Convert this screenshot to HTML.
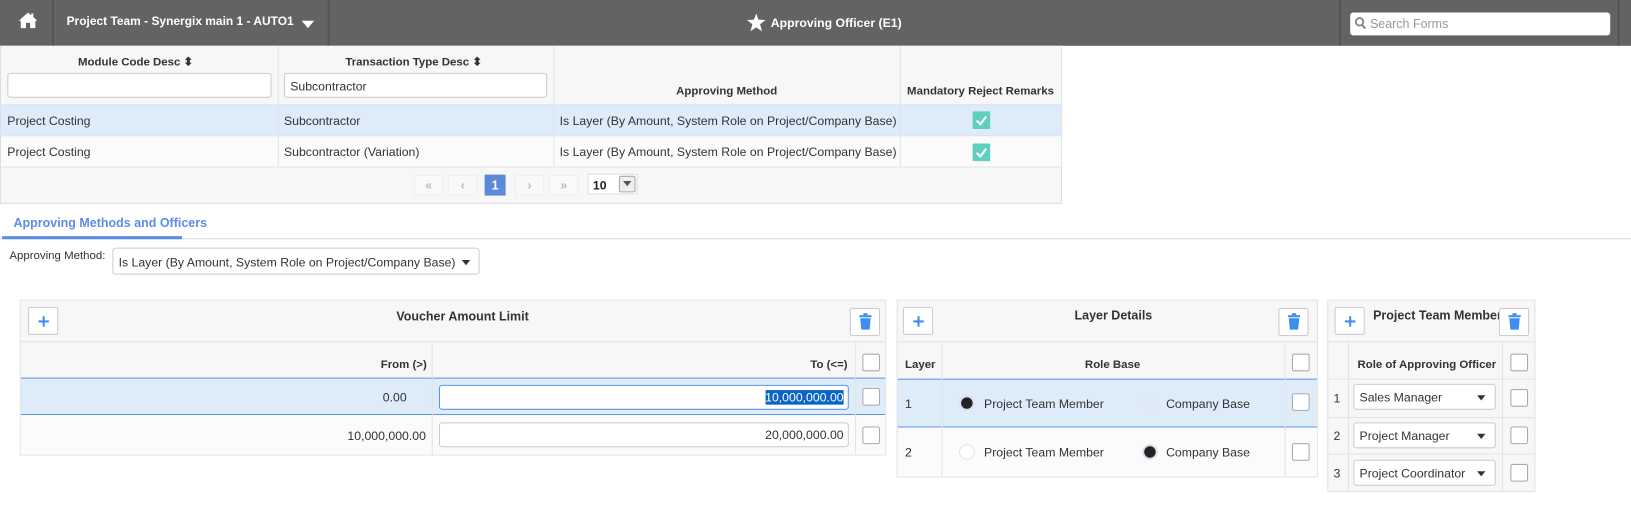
<!DOCTYPE html>
<html><head><meta charset="utf-8"><style>
*{box-sizing:border-box;margin:0;padding:0}
html,body{width:1631px;height:528px;overflow:hidden;background:#fff}
#wrap{position:absolute;left:0;top:0;width:1568px;height:508px;transform:scale(1.0402);transform-origin:0 0;font-family:"Liberation Sans",Arial,sans-serif;font-size:11.8px;color:#333;white-space:nowrap}
.a{position:absolute}
.top{left:0;top:0;width:1568px;height:44px;background:#636363}
.sep{top:0;width:2px;height:44px;background:#555}
.w{color:#fff;font-weight:bold}
.b{font-weight:bold;font-size:11px;color:#333}
.cell{position:absolute;border-right:1px solid #e3e3e3;border-bottom:1px solid #e3e3e3}
.inp{position:absolute;background:#fff;border:1px solid #ccc;border-radius:3px}
.cb{position:absolute;width:17px;height:17px;background:#fff;border:1px solid #aaa;border-radius:2px}
.btn{position:absolute;width:29px;height:27px;background:#fff;border:1px solid #ccc;border-radius:2px}
.plus:before{content:"";position:absolute;left:9px;top:12px;width:10px;height:2px;background:#3d8ef0}
.plus:after{content:"";position:absolute;left:13px;top:8px;width:2px;height:10px;background:#3d8ef0}
.rad{position:absolute;width:15px;height:15px;border-radius:50%;border:1px solid #e6e6e6;background:#fff}
.rad.on{background:#222;border:2px solid #dde;}
.pg{position:absolute;top:168px;width:28px;height:20px;border:1px solid #eee;background:#f9f9f9;color:#bbb;text-align:center;line-height:18px;font-size:12px;font-weight:bold}
.tri{display:inline-block;width:0;height:0;border-left:4px solid transparent;border-right:4px solid transparent;border-top:5px solid #333;vertical-align:middle}
</style></head><body><div id="wrap">
<div class="a top"></div>
<div class="a sep" style="left:50px"></div>
<div class="a sep" style="left:315px"></div>
<div class="a sep" style="left:1287px"></div>
<div class="a sep" style="left:1555px"></div>
<svg class="a" style="left:17px;top:11px" width="20" height="17" viewBox="0 0 20 17"><path d="M10 1 L1 9 L3 9 L3 16 L8 16 L8 11 L12 11 L12 16 L17 16 L17 9 L19 9 L15 5.5 L15 2 L13 2 L13 3.8 Z" fill="#fff"/></svg>
<div class="a w" style="left:64px;top:15px;font-size:11.5px">Project Team - Synergix main 1 - AUTO1</div>
<div class="a" style="left:290px;top:20px;width:0;height:0;border-left:6px solid transparent;border-right:6px solid transparent;border-top:7px solid #fff"></div>
<svg class="a" style="left:718px;top:13px" width="18" height="17" viewBox="0 0 24 23"><path d="M12 0 L15 8 L24 8.5 L17 14 L19.5 23 L12 18 L4.5 23 L7 14 L0 8.5 L9 8 Z" fill="#fff"/></svg>
<div class="a w" style="left:741px;top:15px;font-size:11.8px">Approving Officer (E1)</div>
<div class="a" style="left:1298px;top:12px;width:250px;height:22px;background:#fff;border-radius:3px"></div>
<svg class="a" style="left:1302px;top:16px" width="12" height="13" viewBox="0 0 12 13"><circle cx="5" cy="5" r="3.6" stroke="#888" stroke-width="1.8" fill="none"/><path d="M7.5 8 L10.5 11.5" stroke="#888" stroke-width="2"/></svg>
<div class="a" style="left:1317px;top:16px;color:#999;font-size:12px">Search Forms</div>

<div class="a" style="left:0;top:44px;width:1021px;height:152px;background:#f7f7f7;border:1px solid #ddd;border-top:none"></div>
<div class="cell" style="left:0;top:44px;width:268px;height:57px"></div>
<div class="cell" style="left:268px;top:44px;width:265px;height:57px"></div>
<div class="cell" style="left:533px;top:44px;width:333px;height:57px"></div>
<div class="cell" style="left:866px;top:44px;width:155px;height:57px"></div>
<div class="a b" style="left:75px;top:53px">Module Code Desc &#x2B0D;</div>
<div class="a b" style="left:332px;top:53px">Transaction Type Desc &#x2B0D;</div>
<div class="inp" style="left:7px;top:70px;width:254px;height:24px"></div>
<div class="inp" style="left:273px;top:70px;width:253px;height:24px;padding:5px 5px">Subcontractor</div>
<div class="a b" style="left:650px;top:82px">Approving Method</div>
<div class="a b" style="left:872px;top:82px">Mandatory Reject Remarks</div>
<div class="a" style="left:1px;top:101px;width:1019px;height:30px;background:#deebf8"></div>
<div class="a" style="left:1px;top:131px;width:1019px;height:30px;background:#fbfbfb"></div>
<div class="cell" style="left:0;top:101px;width:268px;height:30px"></div>
<div class="cell" style="left:268px;top:101px;width:265px;height:30px"></div>
<div class="cell" style="left:533px;top:101px;width:333px;height:30px"></div>
<div class="cell" style="left:866px;top:101px;width:155px;height:30px"></div>
<div class="cell" style="left:0;top:131px;width:268px;height:30px"></div>
<div class="cell" style="left:268px;top:131px;width:265px;height:30px"></div>
<div class="cell" style="left:533px;top:131px;width:333px;height:30px"></div>
<div class="cell" style="left:866px;top:131px;width:155px;height:30px"></div>
<div class="a" style="left:7px;top:109px">Project Costing</div>
<div class="a" style="left:273px;top:109px">Subcontractor</div>
<div class="a" style="left:538px;top:109px">Is Layer (By Amount, System Role on Project/Company Base)</div>
<div class="a" style="left:7px;top:139px">Project Costing</div>
<div class="a" style="left:273px;top:139px">Subcontractor (Variation)</div>
<div class="a" style="left:538px;top:139px">Is Layer (By Amount, System Role on Project/Company Base)</div>
<svg class="a" style="left:935px;top:107px" width="17" height="17"><rect width="17" height="17" rx="1" fill="#5fcfbf"/><path d="M4 9 L7.5 12.5 L13 5" stroke="#fff" stroke-width="2" fill="none"/></svg>
<svg class="a" style="left:935px;top:138px" width="17" height="17"><rect width="17" height="17" rx="1" fill="#5fcfbf"/><path d="M4 9 L7.5 12.5 L13 5" stroke="#fff" stroke-width="2" fill="none"/></svg>
<div class="pg" style="left:398px">«</div>
<div class="pg" style="left:431px">‹</div>
<div class="pg" style="left:466px;width:20px;background:#5b8ad6;border-color:#5b8ad6;color:#fff">1</div>
<div class="pg" style="left:495px">›</div>
<div class="pg" style="left:528px">»</div>
<div class="a" style="left:565px;top:167px;width:48px;height:20px;background:#fff;border:1px solid #ddd;padding:3px 4px;font-weight:bold;color:#222">10</div>
<div class="a" style="left:595px;top:169px;width:16px;height:16px;background:#eee;border:1px solid #aaa;border-radius:2px;text-align:center;line-height:12px"><span class="tri" style="border-top-color:#555"></span></div>

<div class="a" style="left:13px;top:207px;color:#5b8de8;font-weight:bold;font-size:12px">Approving Methods and Officers</div>
<div class="a" style="left:0;top:229px;width:1568px;height:1px;background:#ddd"></div>
<div class="a" style="left:2px;top:227px;width:173px;height:3px;background:#5b8de8"></div>
<div class="a" style="left:9px;top:240px;font-size:11px">Approving Method:</div>
<div class="inp" style="left:108px;top:238px;width:353px;height:26px;padding:6px 5px">Is Layer (By Amount, System Role on Project/Company Base) &nbsp;<span class="tri"></span></div>

<div class="a" style="left:19px;top:288px;width:833px;height:150px;background:#f7f7f7;border:1px solid #e3e3e3"></div>
<div class="a" style="left:20px;top:328px;width:831px;height:1px;background:#e3e3e3"></div>
<div class="btn plus" style="left:27px;top:295px"></div>
<div class="a b" style="left:381px;top:297px;font-size:12px">Voucher Amount Limit</div>
<div class="btn" style="left:817px;top:296px"></div>
<div class="a" style="left:415px;top:329px;width:1px;height:108px;background:#e3e3e3"></div>
<div class="a" style="left:822px;top:329px;width:1px;height:108px;background:#e3e3e3"></div>
<div class="a b" style="left:366px;top:345px">From (&gt;)</div>
<div class="a b" style="left:779px;top:345px">To (&lt;=)</div>
<div class="cb" style="left:829px;top:340px"></div>
<div class="a" style="left:20px;top:363px;width:831px;height:36px;background:#deebf8;border-top:1px solid #5b97e8;border-bottom:1px solid #5b97e8"></div>
<div class="a" style="left:415px;top:363px;width:1px;height:36px;background:#e3e3e3"></div>
<div class="a" style="left:822px;top:363px;width:1px;height:36px;background:#e3e3e3"></div>
<div class="a" style="left:20px;top:399px;width:831px;height:38px;background:#fbfbfb"></div>
<div class="a" style="left:415px;top:399px;width:1px;height:38px;background:#e3e3e3"></div>
<div class="a" style="left:822px;top:399px;width:1px;height:38px;background:#e3e3e3"></div>
<div class="a" style="left:368px;top:375px">0.00</div>
<div class="a" style="left:334px;top:412px">10,000,000.00</div>
<div class="inp" style="left:422px;top:370px;width:394px;height:24px;border-color:#5b97e8;text-align:right;padding:4px 4px"><span style="background:#0a64c8;color:#fff">10,000,000.00</span></div>
<div class="inp" style="left:422px;top:406px;width:394px;height:24px;text-align:right;padding:4px 4px">20,000,000.00</div>
<div class="cb" style="left:829px;top:373px"></div>
<div class="cb" style="left:829px;top:410px"></div>

<div class="a" style="left:862px;top:288px;width:405px;height:171px;background:#f7f7f7;border:1px solid #e3e3e3"></div>
<div class="a" style="left:863px;top:328px;width:403px;height:1px;background:#e3e3e3"></div>
<div class="btn plus" style="left:868px;top:295px"></div>
<div class="a b" style="left:1033px;top:296px;font-size:12px">Layer Details</div>
<div class="btn" style="left:1229px;top:296px"></div>
<div class="a" style="left:905px;top:329px;width:1px;height:129px;background:#e3e3e3"></div>
<div class="a" style="left:1235px;top:329px;width:1px;height:129px;background:#e3e3e3"></div>
<div class="a b" style="left:870px;top:345px">Layer</div>
<div class="a b" style="left:1043px;top:345px">Role Base</div>
<div class="cb" style="left:1242px;top:340px"></div>
<div class="a" style="left:863px;top:364px;width:403px;height:47px;background:#deebf8;border-top:1px solid #5b97e8;border-bottom:1px solid #5b97e8"></div>
<div class="a" style="left:905px;top:364px;width:1px;height:47px;background:#e3e3e3"></div>
<div class="a" style="left:1235px;top:364px;width:1px;height:47px;background:#e3e3e3"></div>
<div class="a" style="left:863px;top:411px;width:403px;height:47px;background:#fbfbfb"></div>
<div class="a" style="left:905px;top:411px;width:1px;height:47px;background:#e3e3e3"></div>
<div class="a" style="left:1235px;top:411px;width:1px;height:47px;background:#e3e3e3"></div>
<div class="a" style="left:870px;top:381px">1</div>
<div class="a" style="left:870px;top:428px">2</div>
<div class="rad on" style="left:922px;top:380px"></div>
<div class="a" style="left:946px;top:381px">Project Team Member</div>
<div class="rad" style="left:1098px;top:380px;background:transparent"></div>
<div class="a" style="left:1121px;top:381px">Company Base</div>
<div class="rad" style="left:922px;top:427px"></div>
<div class="a" style="left:946px;top:428px">Project Team Member</div>
<div class="rad on" style="left:1098px;top:427px"></div>
<div class="a" style="left:1121px;top:428px">Company Base</div>
<div class="cb" style="left:1242px;top:378px"></div>
<div class="cb" style="left:1242px;top:426px"></div>

<div class="a" style="left:1276px;top:288px;width:200px;height:185px;background:#f7f7f7;border:1px solid #e3e3e3"></div>
<div class="a" style="left:1277px;top:328px;width:198px;height:1px;background:#e3e3e3"></div>
<div class="btn plus" style="left:1283px;top:295px"></div>
<div class="a b" style="left:1320px;top:296px;font-size:12px">Project Team Member</div>
<div class="btn" style="left:1441px;top:296px"></div>
<div class="a" style="left:1296px;top:329px;width:1px;height:143px;background:#e3e3e3"></div>
<div class="a" style="left:1444px;top:329px;width:1px;height:143px;background:#e3e3e3"></div>
<div class="a b" style="left:1305px;top:345px">Role of Approving Officer</div>
<div class="cb" style="left:1452px;top:340px"></div>
<div class="a" style="left:1277px;top:364px;width:198px;height:1px;background:#e3e3e3"></div>
<div class="a" style="left:1277px;top:401px;width:198px;height:1px;background:#e3e3e3"></div>
<div class="a" style="left:1277px;top:436px;width:198px;height:1px;background:#e3e3e3"></div>
<div class="a" style="left:1282px;top:376px">1</div>
<div class="a" style="left:1282px;top:412px">2</div>
<div class="a" style="left:1282px;top:448px">3</div>
<div class="inp" style="left:1301px;top:369px;width:137px;height:25px;padding:5px 5px">Sales Manager<span class="tri a" style="left:118px;top:10px"></span></div>
<div class="inp" style="left:1301px;top:406px;width:137px;height:25px;padding:5px 5px">Project Manager<span class="tri a" style="left:118px;top:10px"></span></div>
<div class="inp" style="left:1301px;top:442px;width:137px;height:25px;padding:5px 5px">Project Coordinator<span class="tri a" style="left:118px;top:10px"></span></div>
<div class="cb" style="left:1452px;top:374px"></div>
<div class="cb" style="left:1452px;top:410px"></div>
<div class="cb" style="left:1452px;top:446px"></div>

<svg class="a" style="left:826px;top:301px" width="12" height="16" viewBox="0 0 12 16"><rect x="0" y="2" width="12" height="2" fill="#3d8ef0"/><rect x="4" y="0" width="4" height="2" fill="#3d8ef0"/><path d="M1 5 H11 L10 16 H2 Z" fill="#3d8ef0"/></svg>
<svg class="a" style="left:1238px;top:301px" width="12" height="16" viewBox="0 0 12 16"><rect x="0" y="2" width="12" height="2" fill="#3d8ef0"/><rect x="4" y="0" width="4" height="2" fill="#3d8ef0"/><path d="M1 5 H11 L10 16 H2 Z" fill="#3d8ef0"/></svg>
<svg class="a" style="left:1450px;top:301px" width="12" height="16" viewBox="0 0 12 16"><rect x="0" y="2" width="12" height="2" fill="#3d8ef0"/><rect x="4" y="0" width="4" height="2" fill="#3d8ef0"/><path d="M1 5 H11 L10 16 H2 Z" fill="#3d8ef0"/></svg>
</div></body></html>
